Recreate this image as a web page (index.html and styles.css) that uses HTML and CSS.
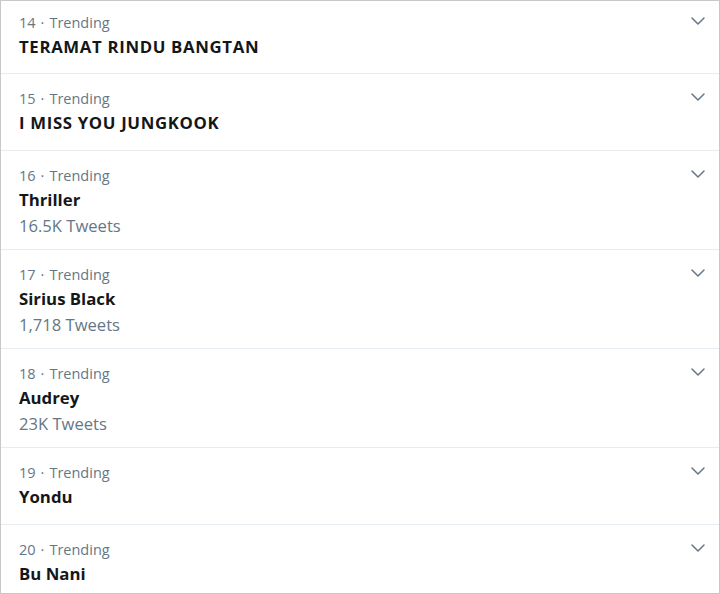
FILE: index.html
```html
<!DOCTYPE html>
<html>
<head>
<meta charset="utf-8">
<link rel="stylesheet" href="styles.css">
</head>
<body>
<div class="list">
  <div class="item">
    <div class="text">
      <div class="meta">14<span class="dot">·</span>Trending</div>
      <div class="title caps">TERAMAT RINDU BANGTAN</div>
    </div>
    <svg class="chev" viewBox="0 0 14 8"><path d="M1 1 L7 7 L13 1"/></svg>
  </div>
  <div class="item">
    <div class="text">
      <div class="meta">15<span class="dot">·</span>Trending</div>
      <div class="title caps">I MISS YOU JUNGKOOK</div>
    </div>
    <svg class="chev" viewBox="0 0 14 8"><path d="M1 1 L7 7 L13 1"/></svg>
  </div>
  <div class="item">
    <div class="text">
      <div class="meta">16<span class="dot">·</span>Trending</div>
      <div class="title">Thriller</div>
      <div class="count">16.5K Tweets</div>
    </div>
    <svg class="chev" viewBox="0 0 14 8"><path d="M1 1 L7 7 L13 1"/></svg>
  </div>
  <div class="item">
    <div class="text">
      <div class="meta">17<span class="dot">·</span>Trending</div>
      <div class="title">Sirius Black</div>
      <div class="count">1,718 Tweets</div>
    </div>
    <svg class="chev" viewBox="0 0 14 8"><path d="M1 1 L7 7 L13 1"/></svg>
  </div>
  <div class="item">
    <div class="text">
      <div class="meta">18<span class="dot">·</span>Trending</div>
      <div class="title">Audrey</div>
      <div class="count">23K Tweets</div>
    </div>
    <svg class="chev" viewBox="0 0 14 8"><path d="M1 1 L7 7 L13 1"/></svg>
  </div>
  <div class="item">
    <div class="text">
      <div class="meta">19<span class="dot">·</span>Trending</div>
      <div class="title">Yondu</div>
    </div>
    <svg class="chev" viewBox="0 0 14 8"><path d="M1 1 L7 7 L13 1"/></svg>
  </div>
  <div class="item">
    <div class="text">
      <div class="meta">20<span class="dot">·</span>Trending</div>
      <div class="title">Bu Nani</div>
    </div>
    <svg class="chev" viewBox="0 0 14 8"><path d="M1 1 L7 7 L13 1"/></svg>
  </div>
</div>
</body>
</html>
```

FILE: styles.css
```css
html, body {
  margin: 0;
  padding: 0;
  background: #ffffff;
}
body {
  font-family: "Open Sans", "Noto Sans", sans-serif;
  width: 720px;
  height: 594px;
  overflow: hidden;
}
.list {
  box-sizing: border-box;
  width: 720px;
  height: 594px;
  border: 1px solid #c8c8c8;
  overflow: hidden;
}
.item {
  display: flex;
  align-items: flex-start;
  padding: 13px 14px 16px 18px;
  border-bottom: 1px solid #e6ecf0;
}
.item:first-child {
  padding-top: 10px;
  padding-bottom: 15px;
}
.text {
  flex: 1;
}
.meta {
  font-size: 14.5px;
  line-height: 24px;
  color: #657786;
}
.dot {
  margin: 0 5px 0 5px;
}
.title {
  font-size: 16.8px;
  line-height: 23px;
  font-weight: 700;
  color: #14171a;
}
.title.caps {
  letter-spacing: 0.65px;
}
.count {
  font-size: 16.6px;
  line-height: 20px;
  padding-top: 5px;
  margin-bottom: -3px;
  color: #657786;
}
.chev {
  width: 14px;
  height: 8px;
  margin-top: 6px;
  fill: none;
  stroke: #657786;
  stroke-width: 1.5;
  stroke-linecap: round;
  stroke-linejoin: round;
}
```
